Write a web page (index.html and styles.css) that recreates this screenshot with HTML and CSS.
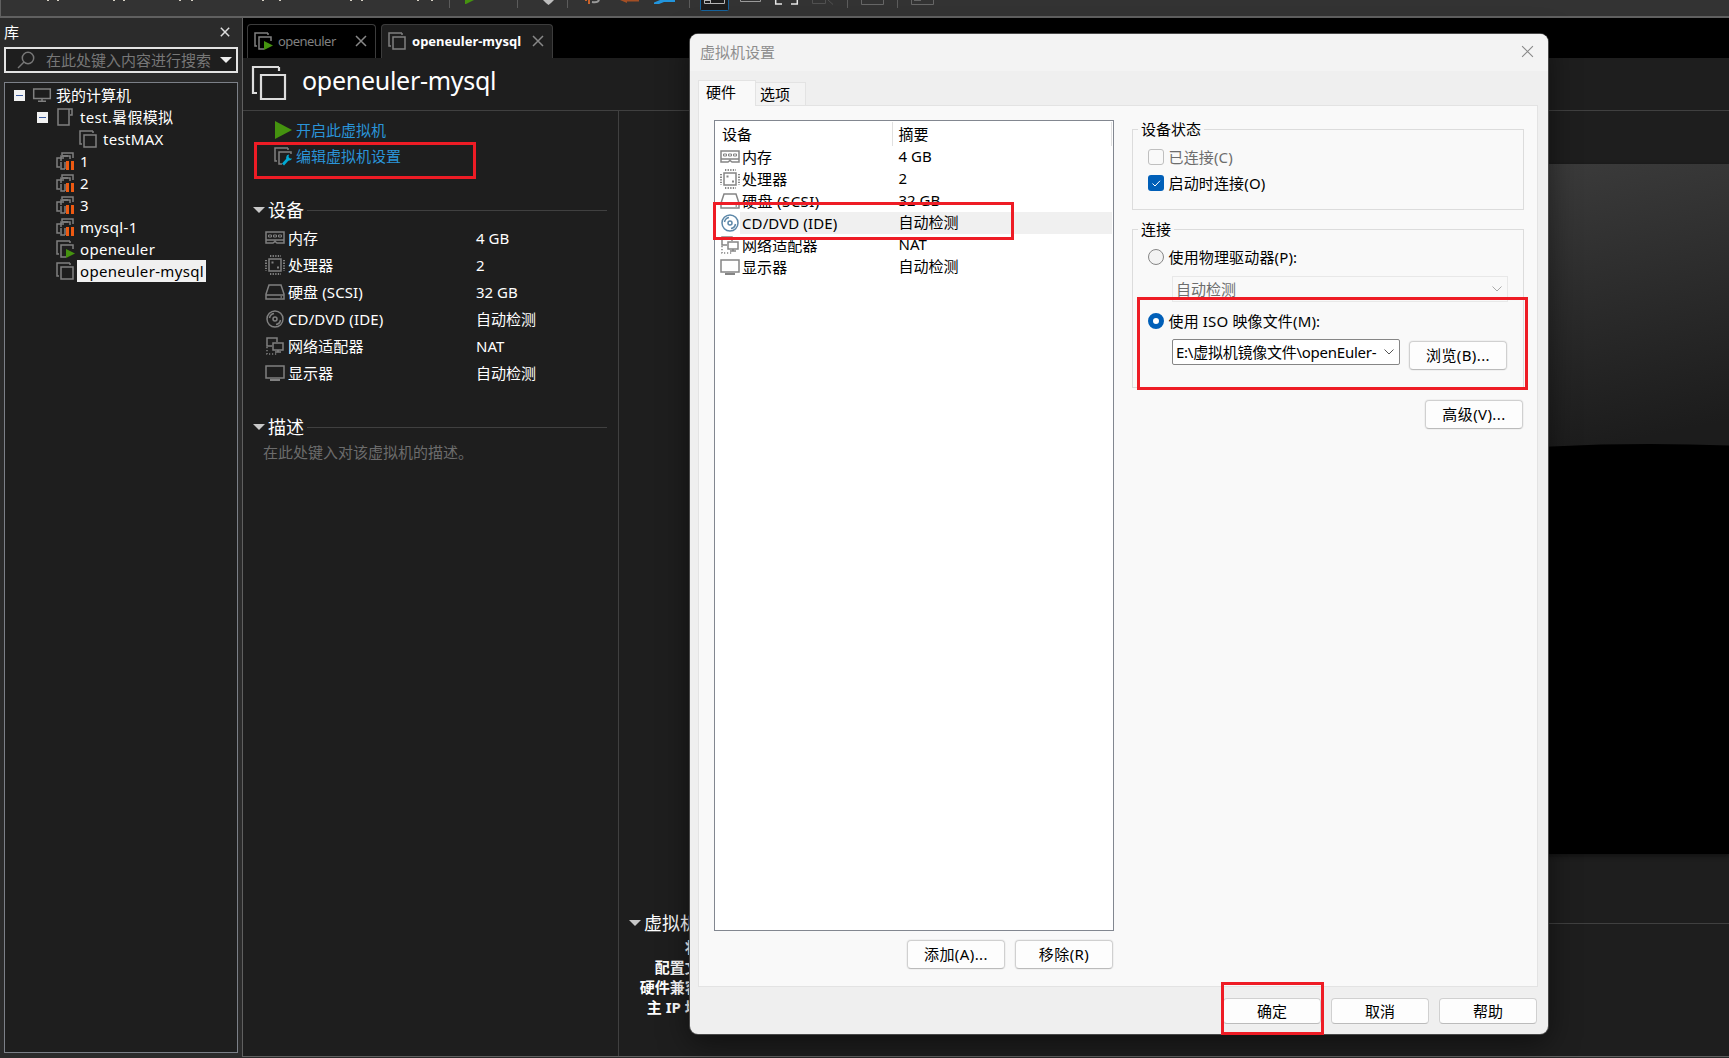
FILE: index.html
```html
<!DOCTYPE html>
<html lang="zh-CN">
<head>
<meta charset="utf-8">
<title>openeuler-mysql</title>
<link rel="stylesheet" href="styles.css">
</head>
<body>
<svg class="defs" width="0" height="0">
  <symbol id="vm" viewBox="0 0 18 18"><path d="M14 1H1V14H3M14 1V3" /><path d="M5 5H17V17H5Z"/></symbol>
  <symbol id="vm-run" viewBox="0 0 18 18"><path d="M14 1H1V14H3M14 1V3M10 17H5V5H17V9"/><path d="M10 9L19 13.5L10 18Z" fill="#45930f" stroke="none"/></symbol>
  <symbol id="vm-pause" viewBox="0 0 18 18"><path d="M8 6H1V15H4M17 6V1H6V3M9 17H5V10M12 4H6M9 17V10"/><path d="M5 9V4H14V7"/><path d="M10 9h3v9h-3zM15 9h3v9h-3z" fill="#ee5a12" stroke="none"/></symbol>
  <symbol id="vm-edit" viewBox="0 0 18 18"><path d="M14 1H1V14H3M14 1V3M8 17H5V5H17V7"/><path d="M9 17.500L14 12" stroke="#00a9d4" stroke-width="2.800"/><path d="M18 11.500a3 3 0 1 1-3-4l-.5 2.500 1.500 1.500z" fill="#00a9d4" stroke="none"/></symbol>
  <symbol id="computer" viewBox="0 0 18 14"><path d="M.7 1H17.300V10.500H.7ZM5 13.200H13M9 10.500V13"/></symbol>
  <symbol id="folder" viewBox="0 0 16 18"><path d="M1 1H12V17H1ZM12 1H15V7H13"/></symbol>
  <symbol id="memory" viewBox="0 0 20 14"><path d="M1 1H19V12H12L10 10.500L8 12H1ZM1 9H19"/><path d="M3.500 4H6.500V6H3.500ZM8.500 4H11.500V6H8.500ZM13.500 4H16.500V6H13.500Z" stroke-width="1"/></symbol>
  <symbol id="cpu" viewBox="0 0 20 20"><path d="M4 4H16V16H4Z"/><path d="M5 1H16M5 19H16" stroke-dasharray="1.300 1.300" stroke-width="2"/><path d="M1 5V16M19 5V16" stroke-dasharray="1.300 1.300" stroke-width="2"/><path d="M6.500 7.500H8.500M12 12.500H14" stroke-width="2"/></symbol>
  <symbol id="disk" viewBox="0 0 20 16"><path d="M1 15V10L4 1H16L19 10V15ZM1 11H19M15.500 13H17"/></symbol>
  <symbol id="disc" viewBox="0 0 18 18"><circle cx="9" cy="9" r="8"/><circle cx="9" cy="9" r="2"/><path d="M3.500 8A5.500 5.500 0 0 1 8 3.500M14.500 10A5.500 5.500 0 0 1 10 14.500"/></symbol>
  <symbol id="net" viewBox="0 0 18 18"><path d="M6 9H1V1H11V5M7 6H17V13H7ZM12 13V15M9 15H15"/><path d="M1 10V17H12" stroke-dasharray="1.200 1.800"/></symbol>
  <symbol id="display" viewBox="0 0 20 16"><path d="M1 1H19V13H1Z"/><path d="M5 15H15" stroke-width="2"/></symbol>
  <symbol id="cross" viewBox="0 0 12 12"><path d="M1 1L11 11M11 1L1 11"/></symbol>
  <symbol id="down" viewBox="0 0 12 6"><path d="M0 0H12L6 6Z" fill="currentColor" stroke="none"/></symbol>
  <symbol id="chevron" viewBox="0 0 10 6"><path d="M.5 .5L5 5L9.500 .5" stroke-width="1"/></symbol>
</svg>

<header class="toolbar">
  <svg width="1729" height="16" viewBox="0 0 1729 16">
    <path class="menu-ends" d="M47 0h2v1h-2zM57 0h2v1h-2zM113 0h2v1h-2zM123 0h2v1h-2zM179 0h2v1h-2zM191 0h2v1h-2zM262 0h2v1h-2zM279 0h2v1h-2zM350 0h2v1h-2zM361 0h2v1h-2zM417 0h2v1h-2zM431 0h2v1h-2z"/>
    <path class="seps" d="M449.500 0V8M517.500 0V8M567.500 0V8M689.500 0V8M847.500 0V8M897.500 0V8"/>
    <path fill="#45930f" d="M465 0h9l-8 4h-1z"/>
    <path fill="#bdbdbd" d="M543 0h11l-3 3-2.500 2-2.500-2z"/>
    <path fill="#c9622a" d="M585 0h2v1h-2zM588 0h2v4h-2z"/>
    <path fill="none" stroke="#999" stroke-width="2" d="M592 2q6 1 7-2"/>
    <path fill="#a34f25" d="M620 0h19v1.500h-12v1.500z"/>
    <path fill="#2295dd" d="M660 0h15v2h-11l-5 2h-5v-1.500z"/>
    <rect x="700.500" y="-8" width="28" height="18.500" rx="1" fill="#1c1c1c" stroke="#17639c"/>
    <path fill="none" stroke="#b5b5b5" d="M704.500 0V3.500H724.500V0M710.500 0V3.500M704 .5H711"/>
    <path fill="none" stroke="#9a9a9a" d="M740.500 0V1.500H760.500V0"/>
    <path fill="none" stroke="#e5e5e5" stroke-width="1.500" d="M775.700 0V4H782M791 4H797.300V0"/>
    <path fill="none" stroke="#505050" d="M812.500 0V3.500H825.500V0M828 0L833 4.500"/>
    <path fill="none" stroke="#666" d="M861.500 0V4.500H883.500V0M911.500 0V4.500H933.500V0M914 .5H921"/>
  </svg>
</header>

<div class="workspace">
  <aside class="library">
    <div class="library-head"><span>库</span><svg class="ic close-lib"><use href="#cross"/></svg></div>
    <div class="search">
      <svg class="ic search-glass" viewBox="0 0 18 18"><circle cx="11" cy="7" r="5.700"/><path d="M7 11L1 17"/></svg>
      <span>在此处键入内容进行搜索</span>
      <svg class="ic search-drop"><use href="#down"/></svg>
    </div>
    <ul class="tree">
      <li class="lv0"><i class="minus"></i><svg class="ic i-comp"><use href="#computer"/></svg><span>我的计算机</span></li>
      <li class="lv1"><i class="minus"></i><svg class="ic i-folder"><use href="#folder"/></svg><span>test.暑假模拟</span></li>
      <li class="lv3"><svg class="ic i-vm"><use href="#vm"/></svg><span>testMAX</span></li>
      <li class="lv2"><svg class="ic i-vm"><use href="#vm-pause"/></svg><span>1</span></li>
      <li class="lv2"><svg class="ic i-vm"><use href="#vm-pause"/></svg><span>2</span></li>
      <li class="lv2"><svg class="ic i-vm"><use href="#vm-pause"/></svg><span>3</span></li>
      <li class="lv2"><svg class="ic i-vm"><use href="#vm-pause"/></svg><span>mysql-1</span></li>
      <li class="lv2"><svg class="ic i-vm"><use href="#vm-run"/></svg><span>openeuler</span></li>
      <li class="lv2 picked"><svg class="ic i-vm"><use href="#vm"/></svg><span>openeuler-mysql</span></li>
    </ul>
  </aside>

  <main class="main">
    <nav class="tabs">
      <div class="tab tab-idle"><svg class="ic i-vm"><use href="#vm-run"/></svg><span>openeuler</span><svg class="ic tab-x"><use href="#cross"/></svg></div>
      <div class="tab tab-on"><svg class="ic i-vm"><use href="#vm"/></svg><span>openeuler-mysql</span><svg class="ic tab-x"><use href="#cross"/></svg></div>
    </nav>
    <div class="title"><svg class="ic title-ic"><use href="#vm"/></svg><h1>openeuler-mysql</h1></div>
    <div class="columns">
      <section class="summary">
        <a class="action"><svg class="play" viewBox="0 0 17 18"><path d="M0 0L17 9L0 18Z" fill="#45930f"/></svg><span>开启此虚拟机</span></a>
        <a class="action"><svg class="ic i-vm"><use href="#vm-edit"/></svg><span>编辑虚拟机设置</span></a>
        <h2 class="sec sec-dev"><svg class="ic tri"><use href="#down"/></svg><span>设备</span></h2>
        <dl class="devices">
          <div><dt><svg class="ic d20 h14"><use href="#memory"/></svg><span>内存</span></dt><dd>4 GB</dd></div>
          <div><dt><svg class="ic d20 h20"><use href="#cpu"/></svg><span>处理器</span></dt><dd>2</dd></div>
          <div><dt><svg class="ic d20 h16"><use href="#disk"/></svg><span>硬盘 (SCSI)</span></dt><dd>32 GB</dd></div>
          <div><dt><svg class="ic d20 h18"><use href="#disc"/></svg><span>CD/DVD (IDE)</span></dt><dd>自动检测</dd></div>
          <div><dt><svg class="ic d20 h18"><use href="#net"/></svg><span>网络适配器</span></dt><dd>NAT</dd></div>
          <div><dt><svg class="ic d20 h16"><use href="#display"/></svg><span>显示器</span></dt><dd>自动检测</dd></div>
        </dl>
        <h2 class="sec sec-desc"><svg class="ic tri"><use href="#down"/></svg><span>描述</span></h2>
        <p class="hint">在此处键入对该虚拟机的描述。</p>
        <div class="mark mark-edit"></div>
      </section>
      <section class="preview">
        <svg class="screen" viewBox="0 0 998 690">
          <defs><linearGradient id="glow" gradientUnits="userSpaceOnUse" x1="800" y1="0" x2="860" y2="285"><stop offset="0" stop-color="#3b3b3b"/><stop offset="1" stop-color="#1c1c1c"/></linearGradient></defs>
          <rect width="998" height="690" fill="url(#glow)"/>
          <circle cx="919" cy="2280" r="2000"/>
          <rect y="560" width="998" height="130"/>
        </svg>
        <h2 class="sec sec-vm"><svg class="ic tri"><use href="#down"/></svg><span>虚拟机详细信息</span></h2>
        <div class="details"><b>状态:</b><b>配置文件:</b><b>硬件兼容性:</b><b>主 IP 地址:</b></div>
      </section>
    </div>
  </main>
</div>

<div class="dialog">
  <div class="dlg-title"><span>虚拟机设置</span><svg class="ic dlg-x"><use href="#cross"/></svg></div>
  <div class="dlg-tabs"><span class="dt-on">硬件</span><span class="dt-off">选项</span></div>
  <div class="panel">
    <div class="left">
      <div class="list">
        <div class="row head"><span class="c1">设备</span><span class="c2">摘要</span></div>
        <div class="row"><span class="c1"><svg class="ic d20 h14"><use href="#memory"/></svg><em>内存</em></span><span class="c2">4 GB</span></div>
        <div class="row"><span class="c1"><svg class="ic d20 h20"><use href="#cpu"/></svg><em>处理器</em></span><span class="c2">2</span></div>
        <div class="row"><span class="c1"><svg class="ic d20 h16"><use href="#disk"/></svg><em class="scsi">硬盘 (SCSI)</em></span><span class="c2">32 GB</span></div>
        <div class="row chosen"><span class="c1"><svg class="ic d20 h18"><use href="#disc"/></svg><em>CD/DVD (IDE)</em></span><span class="c2">自动检测</span></div>
        <div class="row"><span class="c1"><svg class="ic d20 h18"><use href="#net"/></svg><em>网络适配器</em></span><span class="c2">NAT</span></div>
        <div class="row"><span class="c1"><svg class="ic d20 h16"><use href="#display"/></svg><em>显示器</em></span><span class="c2">自动检测</span></div>
      </div>
      <div class="btns"><div class="btn">添加(A)...</div><div class="btn">移除(R)</div></div>
    </div>
    <div class="right">
      <fieldset class="g1"><legend>设备状态</legend>
        <div class="opt off"><i class="box"></i><span>已连接(C)</span></div>
        <div class="opt"><svg class="check" viewBox="0 0 16 16"><rect width="16" height="16" rx="3" fill="#005fb8"/><path d="M4.500 8.500L7 11L12 5.800" fill="none" stroke="#fff"/></svg><span>启动时连接(O)</span></div>
      </fieldset>
      <fieldset class="g2"><legend>连接</legend>
        <div class="opt"><i class="radio"></i><span>使用物理驱动器(P):</span></div>
        <div class="combo combo-off"><span>自动检测</span><svg class="ic chev"><use href="#chevron"/></svg></div>
        <div class="opt opt-iso"><i class="radio radio-on"></i><span>使用 ISO 映像文件(M):</span></div>
        <div class="iso"><div class="combo combo-iso"><span>E:\虚拟机镜像文件\openEuler-</span><svg class="ic chev"><use href="#chevron"/></svg></div><div class="btn">浏览(B)...</div></div>
      </fieldset>
      <div class="btn adv">高级(V)...</div>
    </div>
  </div>
  <div class="foot"><div class="btn">确定</div><div class="btn">取消</div><div class="btn">帮助</div></div>
  <div class="mark mark-cd"></div>
  <div class="mark mark-iso"></div>
  <div class="mark mark-ok"></div>
</div>
</body>
</html>
```
FILE: styles.css
```css
* { box-sizing: border-box; margin: 0; padding: 0; }
html, body { width: 1729px; height: 1058px; overflow: hidden; }
body {
  position: relative; display: flex; flex-direction: column;
  background: #2b2b2b; color: #fff;
  font: 15px/20px "Noto Sans", "Noto Sans CJK SC", sans-serif;
  white-space: nowrap;
}
.defs { position: absolute; }
.ic { flex: none; fill: none; stroke: currentColor; stroke-width: 1.5; overflow: visible; }
.ic use { overflow: visible; }
symbol { overflow: visible; }

.toolbar { height: 18px; background: #333; border-bottom: 2px solid #606060; border-left: 1px solid #606060; flex: none; }
.toolbar svg { display: block; margin-left: -1px; }
.menu-ends { fill: #d5d0c4; }
.seps { stroke: #5c5c5c; }

.workspace { display: flex; height: 1040px; }
.library { width: 242px; padding: 4px 4px 0; display: flex; flex-direction: column; }
.library-head { height: 25px; display: flex; align-items: center; justify-content: space-between; padding-right: 8px; padding-bottom: 6px; }
.close-lib { width: 10px; height: 10px; color: #ddd; stroke-width: 1.8; }
.search { width: 234px; height: 26px; border: 2px solid #e4e4e4; background: #1e1e1e; display: flex; align-items: center; color: #777; padding: 0 4px 0 11px; }
.search-glass { width: 18px; height: 18px; }
.search span { margin-left: 11px; }
.search-drop { width: 12px; height: 6px; color: #eee; margin-left: auto; }
.tree { list-style: none; width: 234px; height: 971px; margin-top: 9px; border: 1px solid #7c8088; background: #1e1e1e; padding-top: 1px; }
.tree li { height: 22px; display: flex; align-items: center; }
.tree .lv0 { padding-left: 9px; }
.tree .lv1 { padding-left: 32px; }
.tree .lv2 { padding-left: 51px; }
.tree .lv3 { padding-left: 74px; }
.tree span { padding: 0 2px; line-height: 22px; letter-spacing: .32px; }
.tree .lv0 span { letter-spacing: 0; margin-left: -1px; }
.tree .ic { color: #808080; }
.i-vm { width: 18px; height: 18px; }
.tree .i-vm { margin-right: 4px; }
.tree .picked .i-vm { margin-right: 3px; }
.picked span { padding-left: 3px; }
.i-comp { width: 18px; height: 14px; margin: 0 4px 0 8px; }
.i-folder { width: 16px; height: 18px; margin: 0 5px 0 9px; }
.minus { width: 11px; height: 11px; background: linear-gradient(#3a5aa0, #3a5aa0) center / 7px 1px no-repeat #f2f2f2; }
.picked span { background: #f0f0f0; color: #000; }

.main { width: 1487px; height: 1039px; border-left: 1px solid #606060; border-bottom: 1px solid #606060; background: #1e1e1e; display: flex; flex-direction: column; }
.tabs { height: 40px; background: #000; display: flex; align-items: flex-end; gap: 5px; padding-left: 4px; flex: none; }
.tab { height: 34px; border: 1px solid #3c3c3c; border-bottom: 0; border-radius: 4px 4px 0 0; display: flex; align-items: center; padding: 0 0 2px 6px; font-size: 13px; color: #808080; }
.tab .i-vm { margin-right: 6px; color: #808080; }
.tab-idle { width: 129px; }
.tab-idle span { letter-spacing: -.55px; }
.tab-on { width: 172px; background: #1e1e1e; color: #fff; font-weight: bold; }
.tab-x { width: 12px; height: 12px; margin-left: auto; margin-right: 8px; color: #888; }
.title { height: 53px; border-bottom: 1px solid #404040; display: flex; align-items: center; padding: 0 0 2px 8px; flex: none; }
.title-ic { width: 36px; height: 36px; color: #ddd; stroke-width: 1.1; }
.title h1 { font-size: 25px; line-height: 34px; font-weight: normal; letter-spacing: -.28px; margin: -6px 0 0 15px; }
.columns { display: flex; flex: 1; min-height: 0; }
.summary { position: relative; width: 376px; border-right: 1px solid #404040; padding: 6px 10px 0; }
.action { display: flex; align-items: center; height: 26px; color: #2a94d8; padding-left: 21px; }
.play { width: 17px; height: 18px; margin: 0 4px 0 1px; }
.action .i-vm { color: #808080; margin-right: 4px; }
.sec { display: flex; align-items: center; font-size: 18px; line-height: 26px; height: 26px; font-weight: normal; }
.sec::after { content: ""; flex: 1; height: 1px; background: #404040; margin-left: 3px; }
.summary .sec { padding-right: 1px; }
.tri { width: 12px; height: 6px; color: #c8c8c8; margin-right: 3px; }
.sec-dev { margin-top: 28px; }
.devices { padding: 0 0 0 12px; margin-top: 1px; }
.devices div { display: flex; height: 27px; align-items: center; }
.devices dt { width: 211px; display: flex; align-items: center; letter-spacing: .1px; }
.devices .ic { color: #808080; margin-right: 3px; }
.d20 { width: 20px; }
.h14 { height: 14px; } .h16 { height: 16px; } .h18 { height: 18px; } .h20 { height: 20px; }
.sec-desc { margin-top: 28px; }
.hint { color: #6c6c6c; padding-left: 10px; margin-top: 2px; }
.preview { flex: 1; padding: 53px 0 0 12px; overflow: hidden; }
.screen { display: block; width: 998px; height: 690px; margin-left: 100px; box-shadow: 0 2px 4px #111; }
.sec-vm { margin: 56px 0 0 -2px; }
.details { width: 88px; display: flex; flex-direction: column; align-items: flex-end; padding-top: 1px; }

.mark { position: absolute; border: 3px solid #ee1c25; }
.mark-edit { left: 11px; top: 31px; width: 222px; height: 37px; }
.mark-cd { left: 23px; top: 168px; width: 301px; height: 38px; }
.mark-iso { left: 447px; top: 263px; width: 391px; height: 93px; }
.mark-ok { left: 531px; top: 948px; width: 103px; height: 53px; }

.dialog { position: absolute; left: 690px; top: 34px; width: 858px; height: 1000px; border-radius: 8px; background: #efefef; color: #000; box-shadow: 0 0 0 1px #484848, 0 8px 30px rgba(0,0,0,.5); }
.dlg-title { height: 37px; background: #f3f3f3; border-radius: 8px 8px 0 0; color: #8e8e8e; display: flex; align-items: center; justify-content: space-between; padding: 0 14px 2px 10px; }
.dlg-x { width: 13px; height: 13px; stroke-width: 1; color: #888; }
.dlg-tabs { height: 34px; display: flex; align-items: flex-end; padding-left: 8px; }
.dt-on { width: 58px; height: 26px; margin-bottom: -1px; background: #f9f9f9; border: 1px solid #e3e3e3; border-bottom: 0; padding: 1px 0 0 7px; }
.dt-off { width: 50px; height: 23px; background: #f3f3f3; border: 1px solid #e3e3e3; border-width: 1px 1px 0 0; padding: 1px 0 0 4px; }
.panel { margin-left: 8px; width: 840px; height: 882px; background: #f9f9f9; border: 1px solid #e3e3e3; display: flex; padding: 14px 13px 0 15px; gap: 18px; }
.left { width: 400px; }
.list { height: 811px; border: 1px solid #828790; background: #fff; padding: 1px; }
.row { display: flex; height: 22px; align-items: center; }
.head { height: 24px; }
.c1 { width: 177px; height: 22px; display: flex; align-items: center; padding-left: 4px; }
.head .c1, .head .c2 { height: 24px; border-right: 1px solid #e0e0e0; }
.head .c1 { padding-left: 6px; }
.c2 { flex: 1; height: 22px; line-height: 21px; padding-left: 5.5px; }
.head .c2 { line-height: 24px; }
.row .ic { color: #858585; margin-right: 2px; }
.row em { font-style: normal; letter-spacing: .1px; }
.row .scsi { letter-spacing: .4px; }
.chosen { background: linear-gradient(#f0f0f0, #f0f0f0) 24px 0 no-repeat; }
.chosen .ic { color: #5c87a8; }
.btns { display: flex; justify-content: flex-end; gap: 10px; margin: 9px 1px 0 0; }
.btn { width: 98px; height: 29px; background: #fdfdfd; border: 1px solid #d0d0d0; border-bottom-color: #bbb; border-radius: 4px; text-align: center; line-height: 27px; letter-spacing: .4px; box-shadow: 0 0 0 1px #f0f0f0; }
.right { width: 392px; }
fieldset { border: 1px solid #dcdcdc; }
legend { margin-left: 5px; padding: 0 3px; line-height: 20px; height: 20px; }
.g1 { height: 91px; margin-top: -1px; }
.g2 { height: 169px; margin-top: 9px; }
.opt { display: flex; align-items: center; height: 26px; padding-left: 15px; gap: 4.5px; letter-spacing: .15px; }
.g1 legend + .opt { margin-top: 5px; }
.g2 legend + .opt { margin-top: 5px; }
.off { color: #6d6d6d; }
.box { width: 16px; height: 16px; border: 1px solid #bfbfbf; border-radius: 3px; }
.check { width: 16px; height: 16px; }
.radio { width: 16px; height: 16px; border: 1px solid #868686; border-radius: 50%; background: #f3f3f3; }
.radio-on { border: 5px solid #005fb8; background: #fff; }
.combo { display: flex; align-items: center; justify-content: space-between; height: 26px; padding: 0 5px 0 3px; }
.combo-off { width: 336px; margin: 6px 0 0 39px; border: 1px solid #e8e8e8; color: #6d6d6d; }
.chev { width: 10px; height: 6px; color: #555; }
.combo-off .chev { color: #aaa; }
.opt-iso { margin-top: 6px; }
.iso { display: flex; padding: 5px 0 0 39px; gap: 9px; }
.combo-iso { width: 228px; border: 1px solid #868686; background: #fff; border-radius: 2px; }
.combo-iso span { letter-spacing: -.25px; }
.iso .btn { margin-top: 2px; }
.adv { margin: 12px 1px 0 auto; }
.foot { display: flex; justify-content: flex-end; gap: 10px; padding: 11px 11px 0 0; }
.foot .btn { height: 26px; line-height: 24px; letter-spacing: 0; }
```
